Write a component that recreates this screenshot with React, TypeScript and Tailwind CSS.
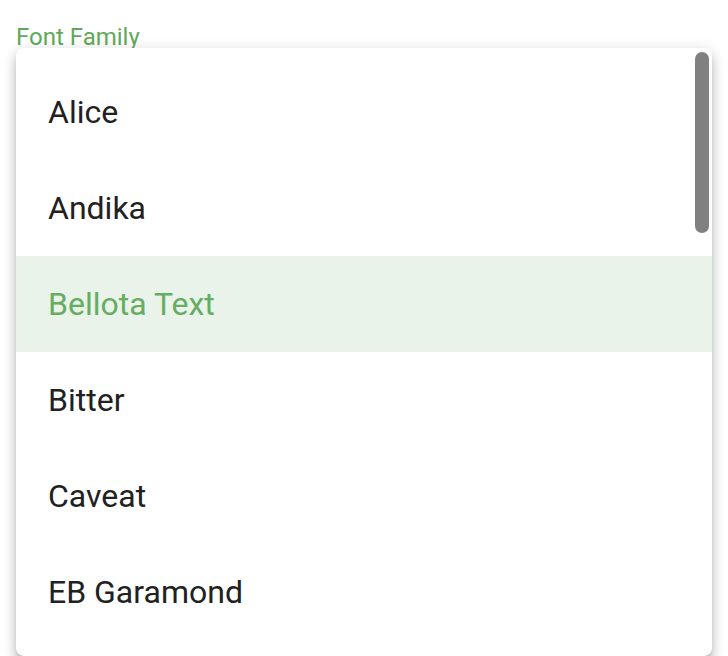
import React from "react";

const fonts = ["Alice", "Andika", "Bellota Text", "Bitter", "Caveat", "EB Garamond"];

export default function App() {
  return (
    <div className="w-[728px] h-[656px] bg-white overflow-hidden" style={{ fontFamily: "Roboto, 'Noto Sans', sans-serif" }}>
      <div className="h-12 pt-[25px] pl-4">
        <div className="h-6 text-[24px] leading-6 text-[#5faa5a]">Font Family</div>
      </div>
      <div className="relative z-10 ml-4 w-[696px] h-[608px] bg-white rounded-lg overflow-hidden shadow-[0_5px_5px_-3px_rgba(0,0,0,0.2),0_8px_10px_1px_rgba(0,0,0,0.14),0_3px_14px_2px_rgba(0,0,0,0.12)]">
        <div className="pt-4">
          {fonts.map((f) => (
            <div
              key={f}
              className={
                "h-24 flex items-center pl-8 text-[32px] " +
                (f === "Bellota Text" ? "bg-[#e9f3e9] text-[#66ad62]" : "text-[#212121]")
              }
            >
              {f}
            </div>
          ))}
        </div>
        <div className="absolute right-[3px] top-1 w-[14px] h-[181px] rounded-full bg-[#808080]" />
      </div>
    </div>
  );
}
